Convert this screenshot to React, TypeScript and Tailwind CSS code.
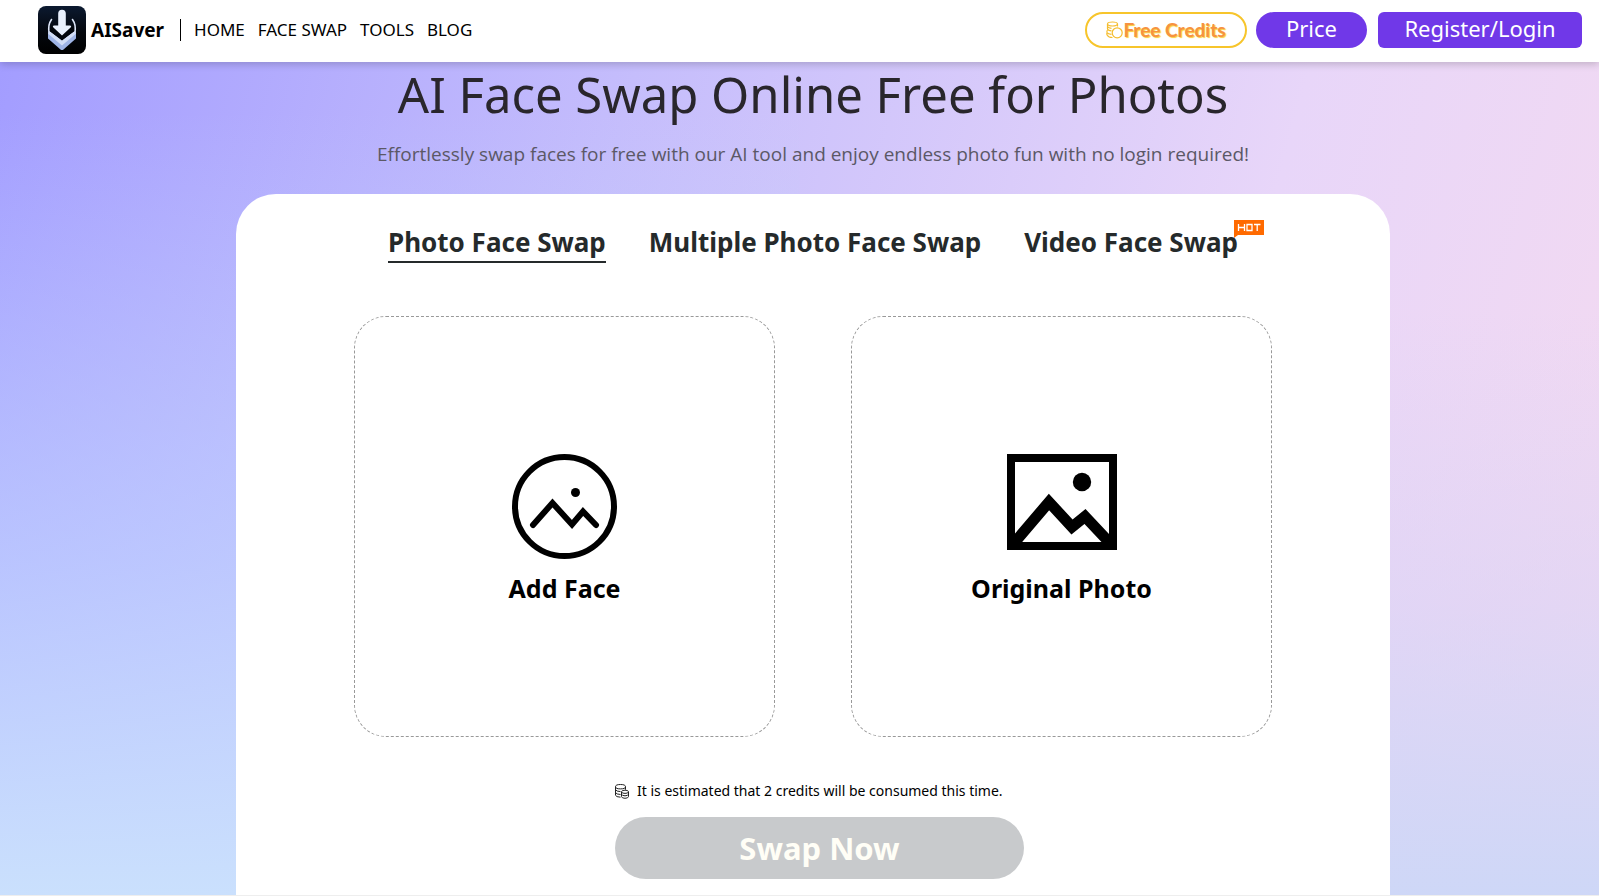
import { useState } from 'react';
import clsx from 'clsx';

const navLinks = ['HOME', 'FACE SWAP', 'TOOLS', 'BLOG'];

const tabs = [
  { id: 'photo', label: 'Photo Face Swap', hot: false },
  { id: 'multiple', label: 'Multiple Photo Face Swap', hot: false },
  { id: 'video', label: 'Video Face Swap', hot: true },
];

function Logo() {
  return (
    <svg viewBox="0 0 48 48" className="h-12 w-12" aria-hidden="true">
      <defs>
        <linearGradient id="logo-bg" x1="0" y1="0" x2="0" y2="1">
          <stop offset="0" stopColor="#0c1a30" />
          <stop offset="0.55" stopColor="#04070d" />
          <stop offset="1" stopColor="#000000" />
        </linearGradient>
      </defs>
      <rect width="48" height="48" rx="8" fill="url(#logo-bg)" />
      <path d="M10 26 24 38 38 26v6.500L25.500 43.400q-1.500 1.200-3 0L10 32.500z" fill="#9fb4e6" />
      <path d="M13.500 13.500Q9.500 19 11.200 27" fill="none" stroke="#dfe8fa" strokeWidth="1.600" strokeLinecap="round" />
      <path d="M34.500 13.500Q38.500 19 36.800 27" fill="none" stroke="#dfe8fa" strokeWidth="1.600" strokeLinecap="round" />
      <path d="M10.400 24 24 34.500 37.600 24v4L24 39.500 10.400 28z" fill="#d3def7" />
      <path d="M14 20 24 30.500 34 20l2.500 5L24 34 11.500 25z" fill="#03060c" />
      <path d="M20.200 7.500a3.800 3.800 0 0 1 7.600 0V19.500h4q2.200.2.800 2L24 29.500 15.400 21.500q-1.400-1.800.8-2h4z" fill="#e9f0fd" />
    </svg>
  );
}

function GoldCoins() {
  return (
    <svg viewBox="0 0 17 18" className="h-[18px] w-[17px]" fill="none" stroke="#f5bd2e" strokeWidth="1.200" aria-hidden="true">
      <ellipse cx="6.500" cy="3" rx="5" ry="2" />
      <path d="M1.500 3v2.500q1 1.600 4 1.800M11.500 3v2.500M1.500 8q.5 1.500 4 1.800M1 11.500q1 1.600 4.500 1.800M1.500 14.500q1 1.900 5 2M1.500 8V5.500M1 11.500q-.3-1.500.5-2.500M1.500 14.500q-1-1-.5-2.500" />
      <circle cx="11.200" cy="11.800" r="5" />
    </svg>
  );
}

function CreditStack() {
  return (
    <svg viewBox="0 0 14 15" className="h-[15px] w-[14px]" fill="none" stroke="#222" strokeWidth="1" aria-hidden="true">
      <ellipse cx="5.500" cy="2.700" rx="5" ry="2.200" />
      <path d="M.5 2.700v8.600q.6 1.700 5 1.900M10.500 2.700v3M.5 5.600q.8 1.900 5 2M.5 8.500q.8 1.900 5 2" />
      <ellipse cx="10" cy="7.800" rx="3.500" ry="1.600" />
      <path d="M6.500 7.800v4.900q.4 1.500 3.500 1.600 3.100-.1 3.500-1.600V7.800M6.500 10.200q.4 1.500 3.500 1.600 3.100-.1 3.500-1.600" />
    </svg>
  );
}

function FaceIcon() {
  return (
    <svg viewBox="0 0 106 106" className="h-[106px] w-[106px]" fill="none" stroke="#000" aria-hidden="true">
      <circle cx="52.500" cy="52.500" r="49.500" strokeWidth="6" />
      <path d="M21 71 40.500 49 60 70.500 71 57.500 84 71" strokeWidth="6" strokeLinecap="round" />
      <circle cx="63.500" cy="38.500" r="4.500" fill="#000" stroke="none" />
    </svg>
  );
}

function PhotoIcon() {
  return (
    <svg viewBox="0 0 110 97" className="h-[97px] w-[110px]" fill="none" stroke="#000" aria-hidden="true">
      <rect x="4" y="4" width="102" height="88" strokeWidth="8" />
      <path d="M8 88 42 48 65 73 78 62.500 102 88" strokeWidth="11" />
      <path d="M6 82v10h9zM104 82v10h-11z" fill="#000" stroke="none" />
      <circle cx="75" cy="28" r="9.200" fill="#000" stroke="none" />
    </svg>
  );
}

function HotBadge() {
  return (
    <svg viewBox="0 0 30 18" className="absolute -top-1 left-full -ml-1 h-[18px] w-[30px]" role="img" aria-label="Hot">
      <path d="M0 0h30v15H4l-4 3z" fill="#ff6a00" />
      <path d="M4.500 4v7M10.500 4v7M4.500 7.500h6M13 4.500h5v6h-5zM20 4.500h6.500M23.200 4.500V11" fill="none" stroke="#fff" strokeWidth="1.300" />
    </svg>
  );
}

function UploadBox({ label, icon }: { label: string; icon: React.ReactNode }) {
  return (
    <button
      type="button"
      className="flex aspect-square flex-col items-center rounded-[32px] border border-dashed border-[#999] pt-[137px] text-[25px] leading-8 font-bold text-black"
    >
      <span className="flex h-[118px] items-start">{icon}</span>
      {label}
    </button>
  );
}

export default function App() {
  const [activeTab, setActiveTab] = useState('photo');

  return (
    <div className="border-b border-[#eee] font-['Noto_Sans',sans-serif] text-[#252a2b]">
      <header className="relative z-10 flex h-[62px] items-center justify-between bg-white pr-[17px] pb-[2px] pl-[38px] shadow-[0_2px_8px_rgba(0,0,0,0.2)]">
        <div className="flex items-center">
          <a href="#" className="flex items-center gap-[5px] text-[19px] font-bold text-black">
            <Logo />
            AISaver
          </a>
          <nav className="ml-4 flex items-center gap-[13px] text-[17px] text-black">
            <span className="h-[22px] w-px bg-black" />
            {navLinks.map((link) => (
              <a key={link} href="#">
                {link}
              </a>
            ))}
          </nav>
        </div>

        <div className="flex items-center text-[22px] leading-8 text-white">
          <button
            type="button"
            className="flex h-9 w-[162px] items-center justify-center rounded-full border-2 border-[#f7c52b] font-['Lato',sans-serif] text-[19px] font-bold text-[#f79240] [text-shadow:1px_1px_1px_#f9cf3a]"
          >
            <GoldCoins />
            Free Credits
          </button>
          <button type="button" className="ml-[9px] flex h-9 w-[111px] justify-center rounded-full bg-[#7038e8]">
            Price
          </button>
          <button type="button" className="ml-[11px] flex h-9 w-[204px] justify-center rounded-md bg-[#7038e8]">
            Register/Login
          </button>
        </div>
      </header>

      {/* left and right fades meet behind the white card */}
      <main className="bg-[linear-gradient(to_bottom,rgba(202,223,253,0)_6%,rgba(192,210,255,0.7)_60%,rgb(202,224,253)_100%),linear-gradient(to_bottom,rgba(206,215,247,0)_30%,rgba(214,211,246,0.5)_65%,rgb(206,215,247)_100%),linear-gradient(105deg,#a39dff_0%,#c5bdfc_35%,#e8d6f9_72%,#f4daf0_100%)] bg-[length:50%_100%,50%_100%,100%_100%] bg-[position:left_top,right_top,left_top] bg-no-repeat pr-[209px] pl-[236px]">
        <h1 className="text-center text-[49px] leading-[64px] text-[#29262c]">AI Face Swap Online Free for Photos</h1>
        <p className="mt-3 pt-[2px] text-center font-['Open_Sans',sans-serif] text-[19px] leading-7 text-[#5b5866]">
          Effortlessly swap faces for free with our AI tool and enjoy endless photo fun with no login required!
        </p>

        <section className="mt-[26px] rounded-t-[40px] bg-white px-[118px] pt-[30px] pb-4">
          <div role="tablist" className="flex justify-center gap-[43px] text-[26px] leading-9 font-bold">
            {tabs.map((tab) => (
              <button
                key={tab.id}
                type="button"
                role="tab"
                aria-selected={activeTab === tab.id}
                onClick={() => setActiveTab(tab.id)}
                className={clsx(
                  'relative border-b-2 pb-[1px] whitespace-nowrap',
                  activeTab === tab.id ? 'border-[#252a2b]' : 'border-transparent',
                )}
              >
                {tab.label}
                {tab.hot ? <HotBadge /> : null}
              </button>
            ))}
          </div>

          <div className="mt-[53px] grid grid-cols-2 gap-[76px]">
            <UploadBox label="Add Face" icon={<FaceIcon />} />
            <UploadBox label="Original Photo" icon={<PhotoIcon />} />
          </div>

          <div className="mx-auto mt-11 w-[396px]">
            <p className="flex items-center gap-2 text-sm leading-5 whitespace-nowrap text-black">
              <CreditStack />
              It is estimated that 2 credits will be consumed this time.
            </p>
            <button
              type="button"
              disabled
              className="mt-4 h-[62px] w-[409px] rounded-[31px] bg-[#c8cacc] text-[31px] leading-[62px] font-bold text-[#fffef6]"
            >
              Swap Now
            </button>
          </div>
        </section>
      </main>
    </div>
  );
}
